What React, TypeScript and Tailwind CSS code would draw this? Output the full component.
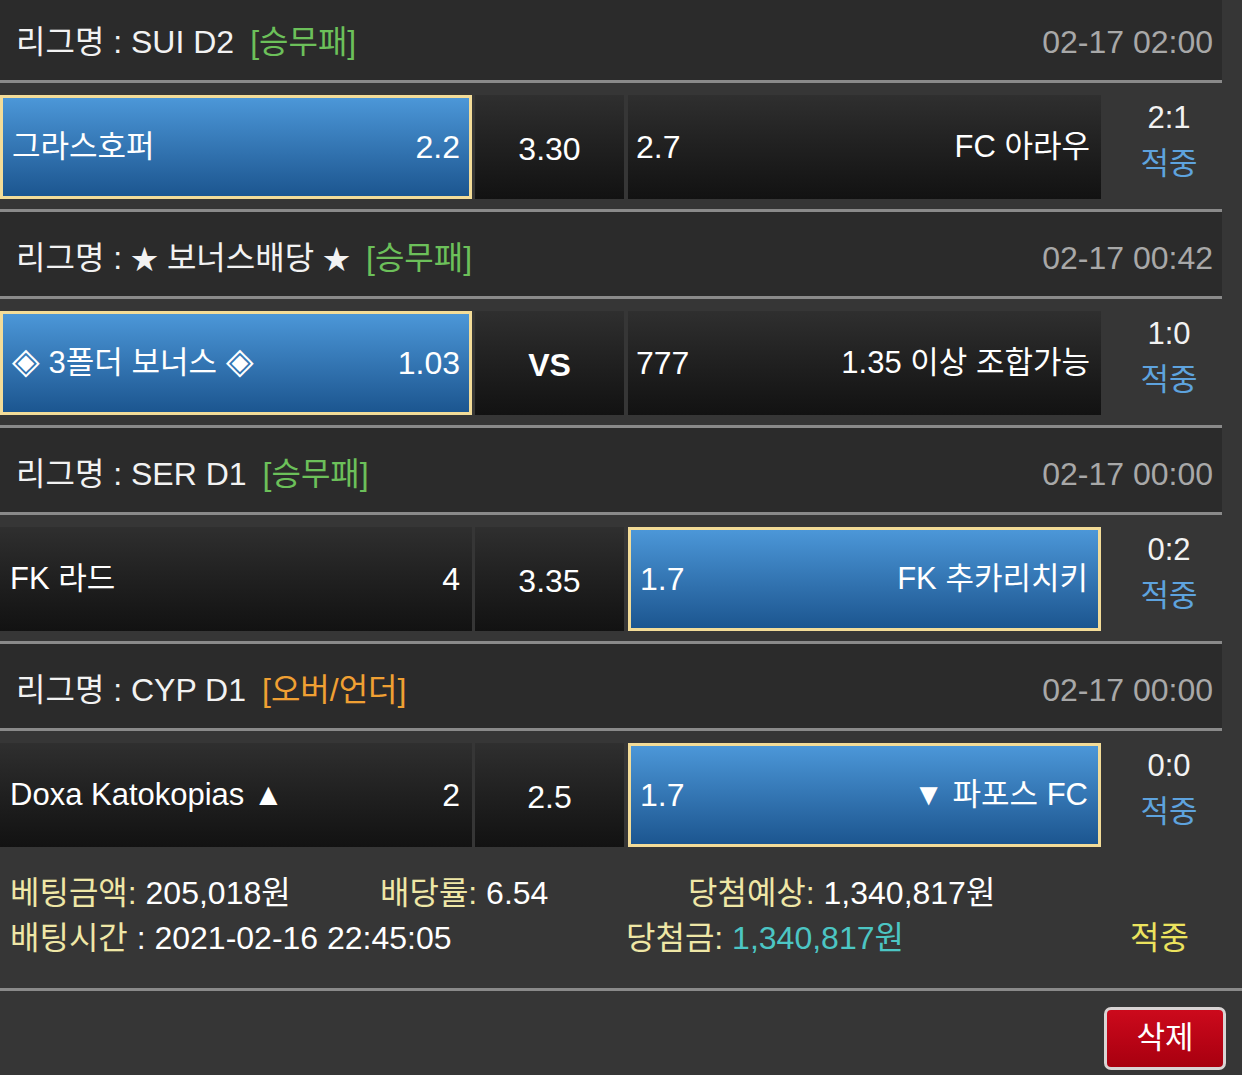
import React from "react";

type Side = { name: React.ReactNode; odds: string; selected?: boolean };

type Bet = {
  league: React.ReactNode;
  type: string;
  typeColor: string;
  time: string;
  home: Side;
  draw: string;
  drawBold?: boolean;
  away: Side;
  score: string;
};

const Star = () => <span className="text-[27px]">★</span>;
const Diamond = () => <span className="text-[36px] leading-none">◈</span>;

const bets: Bet[] = [
  {
    league: "SUI D2",
    type: "[승무패]",
    typeColor: "text-[#6cc05a]",
    time: "02-17 02:00",
    home: { name: "그라스호퍼", odds: "2.2", selected: true },
    draw: "3.30",
    away: { name: "FC 아라우", odds: "2.7" },
    score: "2:1",
  },
  {
    league: (
      <>
        <Star /> 보너스배당 <Star />
      </>
    ),
    type: "[승무패]",
    typeColor: "text-[#6cc05a]",
    time: "02-17 00:42",
    home: {
      name: (
        <>
          <Diamond /> 3폴더 보너스 <Diamond />
        </>
      ),
      odds: "1.03",
      selected: true,
    },
    draw: "VS",
    drawBold: true,
    away: { name: "1.35 이상 조합가능", odds: "777" },
    score: "1:0",
  },
  {
    league: "SER D1",
    type: "[승무패]",
    typeColor: "text-[#6cc05a]",
    time: "02-17 00:00",
    home: { name: "FK 라드", odds: "4" },
    draw: "3.35",
    away: { name: "FK 추카리치키", odds: "1.7", selected: true },
    score: "0:2",
  },
  {
    league: "CYP D1",
    type: "[오버/언더]",
    typeColor: "text-[#f0a033]",
    time: "02-17 00:00",
    home: { name: "Doxa Katokopias ▲", odds: "2" },
    draw: "2.5",
    away: { name: "▼ 파포스 FC", odds: "1.7", selected: true },
    score: "0:0",
  },
];

const cellBase = "h-[104px] flex items-center";
const darkCell = "bg-gradient-to-b from-[#2f2f2f] to-[#121212]";
const blueCell =
  "bg-gradient-to-b from-[#4c97d8] to-[#1c5690] border-[3px] border-[#f3dc98]";

function Header({ bet, first }: { bet: Bet; first: boolean }) {
  return (
    <div
      className={`${first ? "h-[80px] pt-[4px]" : "h-[84px] pt-[8px]"} bg-[#2b2b2b] flex items-center justify-between pl-[16px] pr-[9px] text-[32px]`}
    >
      <div className="flex items-center gap-[16px]">
        <span className="text-[#f2f2f2]">리그명 : {bet.league}</span>
        <span className={bet.typeColor}>{bet.type}</span>
      </div>
      <span className="text-[#a8a8a8]">{bet.time}</span>
    </div>
  );
}

function Row({ bet }: { bet: Bet }) {
  return (
    <div className="h-[126px] pt-[12px] flex gap-[3px] text-[31px] text-white">
      <div
        className={`${cellBase} w-[472px] justify-between ${bet.home.selected ? `${blueCell} pl-[9px] pr-[9px]` : `${darkCell} pl-[10px] pr-[12px]`}`}
      >
        <span>{bet.home.name}</span>
        <span className="text-[32px]">{bet.home.odds}</span>
      </div>
      <div
        className={`${cellBase} ${darkCell} w-[149px] justify-center pt-[4px] text-[32px] ${bet.drawBold ? "font-bold" : ""}`}
      >
        {bet.draw}
      </div>
      <div
        className={`${cellBase} w-[473px] justify-between ml-[1px] ${bet.away.selected ? `${blueCell} pl-[9px] pr-[10px]` : `${darkCell} pl-[8px] pr-[11px]`}`}
      >
        <span className="text-[32px]">{bet.away.odds}</span>
        <span>{bet.away.name}</span>
      </div>
      <div className="flex-1 h-[104px] pl-[12px] flex flex-col items-center justify-center leading-[46px] -mt-[6px]">
        <span className="text-[#f2f2f2]">{bet.score}</span>
        <span className="text-[#5ea3de]">적중</span>
      </div>
    </div>
  );
}

export default function App() {
  return (
    <div className="w-[1242px] h-[1075px] overflow-hidden bg-[#363636] font-['Liberation_Sans','Noto_Sans_CJK_KR',sans-serif]">
      <div className="w-[1222px]">
        {bets.map((bet, i) => (
          <div key={i}>
            <Header bet={bet} first={i === 0} />
            <div className="h-[3px] bg-[#8a8a8a]" />
            <Row bet={bet} />
            {i < bets.length - 1 && <div className="h-[3px] bg-[#8a8a8a]" />}
          </div>
        ))}
      </div>

      {/* summary */}
      <div className="h-[131px] pt-[14px] text-[32px] leading-[45px]">
        <div className="flex pl-[10px]">
          <div className="w-[370px]">
            <span className="text-[#efe7a6]">베팅금액:</span>
            <span className="text-white"> 205,018원</span>
          </div>
          <div className="w-[308px]">
            <span className="text-[#efe7a6]">배당률:</span>
            <span className="text-white"> 6.54</span>
          </div>
          <div>
            <span className="text-[#efe7a6]">당첨예상:</span>
            <span className="text-white"> 1,340,817원</span>
          </div>
        </div>
        <div className="flex pl-[10px]">
          <div className="w-[616px]">
            <span className="text-[#efe7a6]">배팅시간</span>
            <span className="text-white"> : 2021-02-16 22:45:05</span>
          </div>
          <div className="w-[504px]">
            <span className="text-[#efe7a6]">당첨금:</span>
            <span className="text-[#4cc6c4]"> 1,340,817원</span>
          </div>
          <span className="text-[#ece35e]">적중</span>
        </div>
      </div>
      <div className="h-[3px] bg-[#8a8a8a]" />

      <div className="flex justify-end pr-[16px] pt-[16px]">
        <button className="w-[122px] h-[63px] rounded-[7px] border-[3px] border-[#d9d4d4] bg-gradient-to-b from-[#cc0a1c] to-[#a8000f] text-white text-[31px] flex items-center justify-center">
          삭제
        </button>
      </div>
    </div>
  );
}
